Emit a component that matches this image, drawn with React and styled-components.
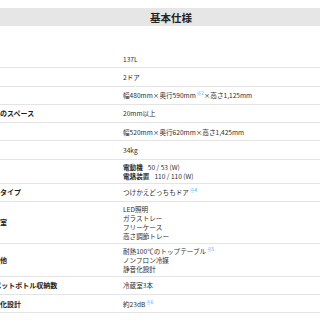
import React from "react";
import styled, { createGlobalStyle } from "styled-components";

const Global = createGlobalStyle`
  html, body { margin: 0; padding: 0; background: #fff; overflow: hidden; }
  body { font-family: "Noto Sans CJK JP", "Noto Sans", sans-serif; }
`;

const Page = styled.div`
  width: 320px;
  height: 320px;
  overflow: hidden;
  padding-top: 8px;
  box-sizing: border-box;
`;

const Sheet = styled.section`
  width: 370px;
  margin-left: -14px;
`;

const Title = styled.h2`
  margin: 0;
  height: 18px;
  background: #e6e6e6;
  display: flex;
  align-items: center;
  justify-content: center;
  font-size: 10.5px;
  font-weight: 700;
  color: #222;
`;

const Table = styled.dl`
  margin: 24px 0 0;
`;

const Row = styled.div`
  display: grid;
  grid-template-columns: 137px 1fr;
  align-items: center;
  min-height: 12.25px;
  padding: 3px 0 2px;
  border-bottom: 1px solid #e4e4e4;
`;

const Label = styled.dt`
  font-size: 7px;
  line-height: 9px;
  font-weight: 700;
  color: #222;
  white-space: nowrap;
`;

const Value = styled.dd`
  margin: 0;
  font-size: 6.6px;
  line-height: 9px;
  color: #2e2e2e;
  white-space: nowrap;
`;

const Line = styled.div``;

const Sub = styled.b`
  font-weight: 700;
  margin-right: 5px;
`;

const Note = styled.sup`
  font-size: 4.5px;
  line-height: 0;
  color: #3d9bf2;
  vertical-align: 3px;
  margin-left: 1px;
`;

const rows = [
  { label: "", lines: ["137L"] },
  { label: "", lines: ["2ドア"] },
  {
    label: "",
    lines: [
      <>
        幅480mm×奥行590mm<Note>※2</Note>×高さ1,125mm
      </>,
    ],
  },
  { label: "放熱のスペース", lines: ["20mm以上"] },
  { label: "", lines: ["幅520mm×奥行620mm×高さ1,425mm"] },
  { label: "", lines: ["34kg"] },
  {
    label: "",
    lines: [
      <>
        <Sub>電動機</Sub>50 / 53 (W)
      </>,
      <>
        <Sub>電熱装置</Sub>110 / 110 (W)
      </>,
    ],
  },
  {
    label: "ドアタイプ",
    lines: [
      <>
        つけかえどっちもドア<Note>※4</Note>
      </>,
    ],
  },
  {
    label: "冷蔵室",
    lines: ["LED照明", "ガラストレー", "フリーケース", "高さ調節トレー"],
  },
  {
    label: "その他",
    lines: [
      <>
        耐熱100℃のトップテーブル<Note>※5</Note>
      </>,
      "ノンフロン冷媒",
      "静音化設計",
    ],
  },
  { label: "2Lペットボトル収納数", lines: ["冷蔵室3本"] },
  {
    label: "静音化設計",
    lines: [
      <>
        約23dB<Note>※6</Note>
      </>,
    ],
  },
];

export default function App() {
  return (
    <>
      <Global />
      <Page>
        <Sheet>
          <Title>基本仕様</Title>
          <Table>
            {rows.map((r, i) => (
              <Row key={i}>
                <Label>{r.label}</Label>
                <Value>
                  {r.lines.map((l, j) => (
                    <Line key={j}>{l}</Line>
                  ))}
                </Value>
              </Row>
            ))}
          </Table>
        </Sheet>
      </Page>
    </>
  );
}
